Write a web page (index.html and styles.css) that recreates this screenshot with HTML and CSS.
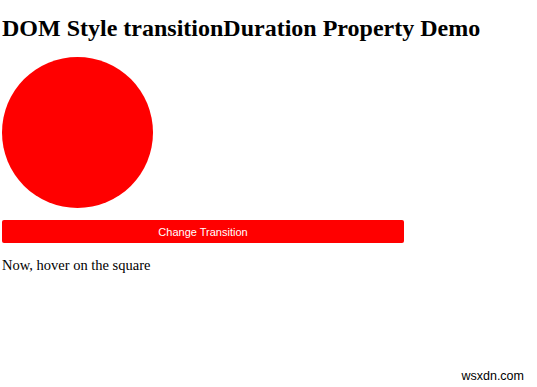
FILE: index.html
```html
<!DOCTYPE html>
<html lang="en">
<head>
    <meta charset="UTF-8">
    <title>DOM Style transitionDuration Property Demo</title>
    <link rel="stylesheet" href="styles.css">
</head>
<body>
    <h2 class="title">DOM Style transitionDuration Property Demo</h2>
    <div class="shape" id="shape"></div>
    <button class="btn" id="change">Change Transition</button>
    <p class="note">Now, hover on the square</p>
    <div class="mark">wsxdn.com</div>
</body>
</html>
```

FILE: styles.css
```css
body {
    margin: 0 2px;
    font-family: "Liberation Serif", "Times New Roman", serif;
    background: #fff;
    color: #000;
    position: relative;
    height: 387px;
}
.title {
    font-size: 24px;
    margin: 15px 0 15px;
}
.shape {
    width: 151px;
    height: 151px;
    border-radius: 50%;
    background-color: #f00;
    transition: all 2s;
}
.btn {
    display: block;
    width: 402px;
    height: 23px;
    margin-top: 12px;
    border: none;
    border-radius: 2px;
    background-color: #f00;
    color: #fff;
    font-family: "Liberation Sans", Arial, sans-serif;
    font-size: 11px;
    cursor: pointer;
}
.note {
    font-size: 14.5px;
    margin: 14px 0 0;
}
.mark {
    position: absolute;
    right: 11px;
    bottom: 4px;
    font-family: "Liberation Sans", Arial, sans-serif;
    font-size: 12.5px;
}
```
